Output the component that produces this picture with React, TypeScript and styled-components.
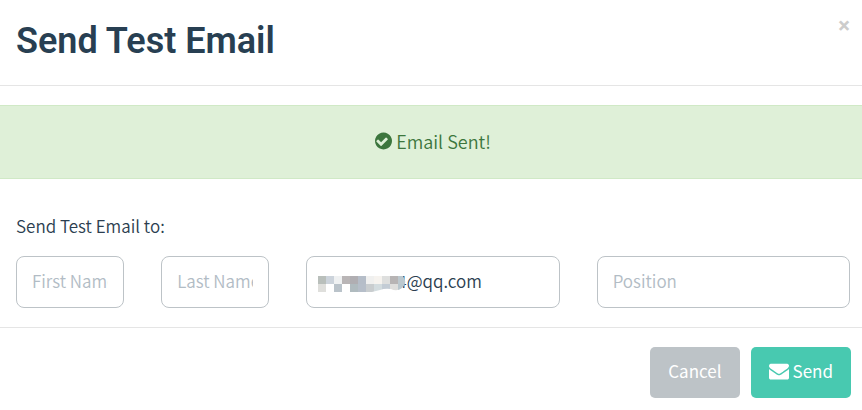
import React from "react";
import styled, { createGlobalStyle } from "styled-components";

const GlobalStyle = createGlobalStyle`
  *, *::before, *::after { box-sizing: border-box; }
  body {
    margin: 0;
    background: #fff;
    color: #2c3e50;
    font-family: "Noto Sans CJK SC", "Noto Sans", sans-serif;
    font-size: 17px;
    font-weight: 350;
    line-height: 24px;
  }
`;

const Header = styled.header`
  display: flex;
  justify-content: space-between;
  align-items: flex-start;
  padding: 16px 12px 18px 16px;
  border-bottom: 1px solid #e5e5e5;
`;

const Title = styled.h1`
  margin: 0;
  color: #283f52;
  font-family: Roboto, sans-serif;
  font-size: 36px;
  font-weight: 600;
  line-height: 51px;
`;

const CloseButton = styled.button`
  padding: 0;
  border: 0;
  background: none;
  color: #ccc;
  font-family: Roboto, sans-serif;
  font-size: 22px;
  font-weight: 700;
  line-height: 20px;
  cursor: pointer;
`;

const Alert = styled.div`
  display: flex;
  align-items: center;
  justify-content: center;
  gap: 4px;
  margin-top: 19px;
  padding: 23px 16px 25px 20px;
  border: solid #d0e9c6;
  border-width: 1px 0;
  background: #dff0d8;
  color: #3c763d;
  font-size: 18px;
`;

const Icon = styled.svg<{ $width: number }>`
  width: ${(p) => p.$width}px;
  height: 20px;
  flex: none;
  fill: currentColor;
`;

const Fields = styled.fieldset`
  min-width: 0;
  margin: 0;
  padding: 35px 12px 19px 16px;
  border: 0;
`;

const Legend = styled.legend`
  float: left;
  width: 100%;
  margin-bottom: 18px;
  padding: 0;
  font-size: 17px;
`;

const FieldRow = styled.div`
  clear: both;
  display: grid;
  grid-template-columns: repeat(6, minmax(0, 1fr));
  gap: 37px;
`;

const Field = styled.div<{ $span?: number }>`
  position: relative;
  grid-column: span ${(p) => p.$span ?? 1};
`;

const Input = styled.input<{ $masked?: boolean }>`
  display: block;
  width: 100%;
  height: 52px;
  padding: 0 15px 3px ${(p) => (p.$masked ? 90 : 15)}px;
  border: 1px solid #bdc3c7;
  border-radius: 8px;
  background: #fff;
  color: #2c3e50;
  font: inherit;
  outline: 0;
  &::placeholder { color: #b2bcc5; opacity: 1; }
`;

const Mosaic = styled.svg`
  position: absolute;
  left: 12px;
  top: 20px;
  width: 88px;
  height: 16px;
`;

const Footer = styled.footer`
  display: flex;
  justify-content: flex-end;
  gap: 11px;
  padding: 19px 11px 12px;
  border-top: 1px solid #e5e5e5;
`;

const Button = styled.button<{ $primary?: boolean }>`
  display: flex;
  align-items: center;
  gap: 4px;
  height: 51px;
  padding: 0 18px 3px;
  border: 0;
  border-radius: 5px;
  background: ${(p) => (p.$primary ? "#48c9b0" : "#bdc3c7")};
  color: #fff;
  font: inherit;
  font-weight: 400;
  cursor: pointer;
`;

const maskRows = [
  ["#b9bfbb", "#ccd3db", "#eff1f2", "#b9b5b6", "#b0aeb2", "#b5bdc8", "#f0f0ef", "#f6f3ef", "#dedfde", "#b7b4b4", "#bcc8ce"],
  ["#dfdfdc", "#ffffff", "#bac3ca", "#ffffff", "#b0bbbf", "#b6bec9", "#c9cdcf", "#d3dcdf", "#c3ccd5", "#dededc", "#b8c6cd"],
];

function MaskedPart() {
  return (
    <Mosaic viewBox="0 0 88 16" aria-hidden="true">
      <clipPath id="mask-edge">
        <path d="M0 0H85Q90 7 84 12Q79 16 73 13Q67 12 62 14L54 16H0Z" />
      </clipPath>
      <g clipPath="url(#mask-edge)" shapeRendering="crispEdges">
        {maskRows.map((row, y) =>
          row.map((fill, x) => (
            <rect key={`${x}-${y}`} x={x * 8} y={y * 8} width="8" height="8" fill={fill} />
          ))
        )}
      </g>
    </Mosaic>
  );
}

export default function App() {
  return (
    <>
      <GlobalStyle />
      <main>
        <Header>
          <Title>Send Test Email</Title>
          <CloseButton type="button" aria-label="Close">×</CloseButton>
        </Header>
        <Alert role="status">
          <Icon $width={17} viewBox="128 0 1536 1792" aria-hidden="true">
            <path d="M1284 734q0-28-18-46l-91-90q-19-19-45-19t-45 19l-408 407-226-226q-19-19-45-19t-45 19l-91 90q-18 18-18 46 0 27 18 45l362 362q19 19 45 19 27 0 46-19l543-543q18-18 18-45zm380 162q0 209-103 385.5t-279.5 279.5-385.5 103-385.5-103-279.5-279.5-103-385.5 103-385.5 279.5-279.5 385.5-103 385.5 103 279.5 279.5 103 385.5z" />
          </Icon>
          <span>Email Sent!</span>
        </Alert>
        <Fields>
          <Legend>Send Test Email to:</Legend>
          <FieldRow>
            <Field><Input aria-label="First Name" placeholder="First Name" /></Field>
            <Field><Input aria-label="Last Name" placeholder="Last Name" /></Field>
            <Field $span={2}>
              <Input type="text" aria-label="Email" defaultValue="4@qq.com" $masked />
              <MaskedPart />
            </Field>
            <Field $span={2}><Input aria-label="Position" placeholder="Position" /></Field>
          </FieldRow>
        </Fields>
        <Footer>
          <Button type="button">Cancel</Button>
          <Button type="button" $primary>
            <Icon $width={20} viewBox="0 0 1792 1792" aria-hidden="true">
              <path d="M1792 710v794q0 66-47 113t-113 47h-1472q-66 0-113-47t-47-113v-794q44 49 101 87 362 246 497 345 57 42 92.5 65.5t94.5 48 110 24.5h2q51 0 110-24.5t94.5-48 92.5-65.5q170-123 498-345 57-39 100-87zm0-294q0 79-49 151t-122 123q-376 261-468 325-10 7-42.5 31t-54 38.5-52 32.5-57.5 27-50 9h-2q-23 0-50-9t-57.5-27-52-32.5-54-38.5-42.5-31q-91-64-262-182.5t-205-142.5q-62-42-117-115.5t-55-136.5q0-78 41.5-130t118.5-52h1472q65 0 112.5 47t47.5 113z" />
            </Icon>
            <span>Send</span>
          </Button>
        </Footer>
      </main>
    </>
  );
}
